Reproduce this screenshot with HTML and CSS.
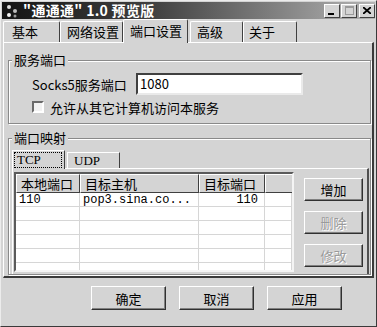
FILE: index.html
```html
<!DOCTYPE html>
<html lang="zh-CN">
<head>
    <meta charset="UTF-8">
    <title>通通通 1.0 预览版</title>
    <link rel="stylesheet" href="styles.css">
</head>
<body>

<div class="window">
    <div class="titlebar">
        <svg class="app-icon" width="14" height="14" viewBox="0 0 14 14">
            <circle cx="4" cy="3" r="2" fill="#e0e0e0"/>
            <circle cx="10" cy="7" r="2" fill="#bdbdbd"/>
            <circle cx="4" cy="11" r="2" fill="#f4f4f4"/>
            <circle cx="10" cy="12" r="1.5" fill="#9a9a9a"/>
        </svg>
        <span class="title">"通通通" 1.0 预览版</span>
        <div class="caption-buttons">
            <span class="cap-btn"><svg width="8" height="8" viewBox="0 0 8 8"><rect x="0" y="6" width="6" height="2" fill="#000"/></svg></span>
            <span class="cap-btn"><svg width="9" height="9" viewBox="0 0 9 9"><rect x="0.5" y="0.5" width="8" height="8" fill="none" stroke="#9a9a9a"/><rect x="0" y="0" width="9" height="2" fill="#9a9a9a"/></svg></span>
            <span class="cap-btn close"><svg width="8" height="7" viewBox="0 0 8 7"><path d="M0 0 L8 7 M8 0 L0 7" stroke="#000" stroke-width="1.8"/></svg></span>
        </div>
    </div>

    <div class="tabs">
        <div class="tab t-basic">基本</div>
        <div class="tab t-net">网络设置</div>
        <div class="tab t-port active">端口设置</div>
        <div class="tab t-adv">高级</div>
        <div class="tab t-about">关于</div>
    </div>

    <div class="tab-panel">
        <div class="group group-service">
            <div class="group-title">服务端口</div>
            <div class="field-row">
                <span class="field-label">Socks5服务端口</span>
                <div class="text-input">1080</div>
            </div>
            <div class="check-row">
                <span class="checkbox"></span>
                <span class="check-label">允许从其它计算机访问本服务</span>
            </div>
        </div>

        <div class="group group-mapping">
            <div class="group-title">端口映射</div>
            <div class="inner-tabs">
                <div class="itab active"><span class="focus">TCP</span></div>
                <div class="itab">UDP</div>
            </div>
            <div class="inner-panel">
                <div class="listview">
                    <div class="lv-row lv-head">
                        <div class="lv-hcell">本地端口</div>
                        <div class="lv-hcell">目标主机</div>
                        <div class="lv-hcell">目标端口</div>
                        <div class="lv-hcell last"></div>
                    </div>
                    <div class="lv-row">
                        <div class="lv-cell">110</div>
                        <div class="lv-cell">pop3.sina.co...</div>
                        <div class="lv-cell num">110</div>
                        <div class="lv-cell"></div>
                    </div>
                    <div class="lv-row"><div class="lv-cell"></div><div class="lv-cell"></div><div class="lv-cell"></div><div class="lv-cell"></div></div>
                    <div class="lv-row"><div class="lv-cell"></div><div class="lv-cell"></div><div class="lv-cell"></div><div class="lv-cell"></div></div>
                    <div class="lv-row"><div class="lv-cell"></div><div class="lv-cell"></div><div class="lv-cell"></div><div class="lv-cell"></div></div>
                    <div class="lv-row"><div class="lv-cell"></div><div class="lv-cell"></div><div class="lv-cell"></div><div class="lv-cell"></div></div>
                    <div class="lv-row"><div class="lv-cell"></div><div class="lv-cell"></div><div class="lv-cell"></div><div class="lv-cell"></div></div>
                </div>
                <div class="side-buttons">
                    <button class="btn">增加</button>
                    <button class="btn" disabled>删除</button>
                    <button class="btn" disabled>修改</button>
                </div>
            </div>
        </div>
    </div>

    <div class="dialog-buttons">
        <button class="btn big">确定</button>
        <button class="btn big">取消</button>
        <button class="btn big">应用</button>
    </div>
</div>

</body>
</html>
```

FILE: styles.css
```css
body, html {
    margin: 0;
    padding: 0;
    background: #d4d4d4;
    font-family: "Noto Sans CJK SC", "DejaVu Sans", sans-serif;
    font-size: 13px;
    color: #000;
}

* {
    box-sizing: border-box;
}

.window {
    width: 377px;
    height: 327px;
    padding: 1px;
    border: 1px solid;
    border-color: #ececec #3a3a3a #3a3a3a #ececec;
    background: #d4d4d4;
}

/* title bar */

.titlebar {
    height: 17px;
    display: flex;
    align-items: center;
    background: linear-gradient(to right, #141414 0%, #404040 40%, #b4b4b4 100%);
    color: #fff;
    padding-left: 3px;
}

.app-icon {
    margin-right: 4px;
}

.title {
    font-weight: bold;
    font-size: 14px;
    line-height: 17px;
    letter-spacing: 0.3px;
}

.caption-buttons {
    margin-left: auto;
    display: flex;
    align-items: center;
}

.cap-btn {
    width: 16px;
    height: 14px;
    display: flex;
    align-items: center;
    justify-content: center;
    background: #d4d4d4;
    border: 1px solid;
    border-color: #fff #404040 #404040 #fff;
    margin-left: 1px;
}

.cap-btn.close {
    margin-left: 2px;
}

/* main tabs */

.tabs {
    height: 23px;
    display: flex;
    align-items: flex-end;
    padding-left: 1px;
}

.tab {
    height: 21px;
    line-height: 19px;
    padding-left: 8px;
    border: 1px solid;
    border-bottom: none;
    border-color: #fff #404040 transparent #fff;
    border-radius: 2px 2px 0 0;
    position: relative;
}

.t-basic { width: 57px; }
.t-net { width: 63px; padding-left: 6px; }
.t-adv { width: 53px; margin-left: 2px; padding-left: 6px; }
.t-about { width: 54px; padding-left: 5px; }

.tab.active {
    width: 65px;
    height: 24px;
    margin-bottom: -1px;
    padding-left: 6px;
    line-height: 21px;
    background: #d4d4d4;
    z-index: 1;
}

.tab-panel {
    height: 236px;
    margin: 0 1px 0 1px;
    padding: 17px 1px 0 4px;
    border: 1px solid;
    border-right-width: 2px;
    border-bottom-width: 2px;
    border-color: #fff #3a3a3a #3a3a3a #fff;
}

/* group boxes: etched frame, caption sits over the top line */

.group {
    position: relative;
    border: 1px solid #8a8a8a;
    box-shadow: inset 1px 1px 0 #fff, 1px 1px 0 #fff;
}

.group-title {
    position: absolute;
    top: -9px;
    left: 3px;
    padding: 0 2px;
    line-height: 16px;
    background: #d4d4d4;
}

.group-service {
    height: 64px;
    padding: 12px 0 0 23px;
}

.field-row {
    display: flex;
    align-items: center;
    height: 22px;
}

.field-label {
    width: 104px;
    flex: none;
}

.text-input {
    width: 167px;
    height: 22px;
    background: #fff;
    border: 2px solid;
    border-color: #404040 #eaeaea #eaeaea #404040;
    padding-left: 2px;
    line-height: 18px;
}

.check-row {
    display: flex;
    align-items: center;
    margin-top: 5px;
    height: 14px;
}

.checkbox {
    flex: none;
    width: 12px;
    height: 12px;
    background: #f2f2f2;
    border: 2px solid;
    border-color: #6a6a6a #fff #fff #6a6a6a;
    margin-right: 6px;
}

.check-label {
    white-space: nowrap;
}

.group-mapping {
    margin-top: 14px;
    height: 137px;
    padding: 11px 1px 0 3px;
}

/* inner tab control */

.inner-tabs {
    height: 18px;
    display: flex;
    align-items: flex-end;
}

.itab {
    width: 53px;
    height: 16px;
    line-height: 15px;
    padding-left: 6px;
    border: 1px solid;
    border-bottom: none;
    border-color: #fff #404040 transparent #fff;
    margin-left: 2px;
    font-family: "Liberation Serif", "Noto Sans CJK SC", serif;
    font-size: 13px;
}

.itab.active {
    height: 19px;
    margin-left: 0;
    margin-bottom: -1px;
    padding-left: 2px;
    padding-top: 1px;
    background: #d4d4d4;
    position: relative;
    z-index: 1;
}

.focus {
    display: inline-block;
    width: 46px;
    line-height: 14px;
    padding-left: 2px;
    outline: 1px dotted #000;
}

.inner-panel {
    height: 106px;
    display: flex;
    border: 1px solid;
    border-right-width: 2px;
    border-color: #fff #505050 transparent #fff;
    border-bottom: none;
    padding: 3px 0 0 1px;
}

/* list view */

.listview {
    width: 280px;
    height: 100px;
    background: #fff;
    border: 2px solid;
    border-color: #5a5a5a #f4f4f4 #f4f4f4 #5a5a5a;
    overflow: hidden;
}

.lv-row {
    display: grid;
    grid-template-columns: 64px 119px 66px 1fr;
    height: 14px;
    line-height: 14px;
    border-bottom: 1px solid #d6d6d6;
}

.lv-head {
    height: 19px;
    line-height: 17px;
    border-bottom: none;
    background: #d4d4d4;
}

.lv-hcell {
    border: 1px solid;
    border-color: #fff #404040 #404040 #fff;
    padding-left: 4px;
}

.lv-hcell.last {
    border-right: none;
}

.lv-cell {
    border-right: 1px solid #d6d6d6;
    padding-left: 3px;
    font-family: "Liberation Mono", "Noto Sans CJK SC", monospace;
    font-size: 12px;
}

.lv-cell.num {
    text-align: right;
    padding-right: 6px;
}

.side-buttons {
    display: flex;
    flex-direction: column;
    margin: 6px 0 0 10px;
    gap: 10px;
}

/* buttons */

.btn {
    font-family: "Noto Sans CJK SC", sans-serif;
    font-size: 13px;
    width: 59px;
    height: 23px;
    padding: 0;
    background: #d4d4d4;
    border: 1px solid;
    border-color: #fff #303030 #303030 #fff;
    box-shadow: inset -1px -1px 0 #808080;
    color: #000;
    line-height: 19px;
}

.btn:disabled {
    color: #9a9a9a;
    text-shadow: 1px 1px 0 #fff;
}

.dialog-buttons {
    display: flex;
    gap: 13px;
    margin: 8px 0 0 89px;
}

.btn.big {
    width: 75px;
    height: 24px;
}
```
